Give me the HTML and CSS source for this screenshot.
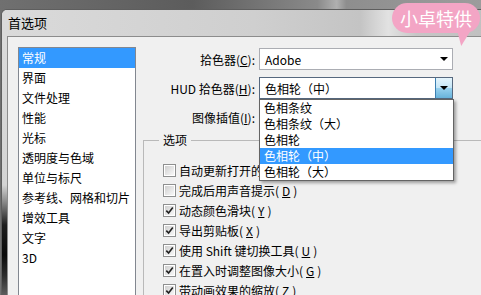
FILE: index.html
```html
<!DOCTYPE html>
<html lang="zh-CN">
<head>
    <meta charset="UTF-8">
    <title>首选项</title>
    <link rel="stylesheet" href="styles.css">
</head>
<body>

    <div class="window">
        <div class="title-bar">首选项</div>

        <div class="client">
            <ul class="nav-list">
                <li class="active">常规</li>
                <li>界面</li>
                <li>文件处理</li>
                <li>性能</li>
                <li>光标</li>
                <li>透明度与色域</li>
                <li>单位与标尺</li>
                <li>参考线、网格和切片</li>
                <li>增效工具</li>
                <li>文字</li>
                <li>3D</li>
            </ul>

            <div class="main-pane">
                <div class="form-grid">
                    <label class="form-label">拾色器(<u>C</u>):</label>
                    <div class="select">
                        <span>Adobe</span>
                        <span class="arrow"></span>
                    </div>

                    <label class="form-label">HUD 拾色器(<u>H</u>):</label>
                    <div class="select select-open">
                        <span>色相轮（中）</span>
                        <span class="arrow-btn"><span class="arrow"></span></span>
                        <ul class="dropdown">
                            <li>色相条纹</li>
                            <li>色相条纹（大）</li>
                            <li>色相轮</li>
                            <li class="active">色相轮（中）</li>
                            <li>色相轮（大）</li>
                        </ul>
                    </div>

                    <label class="form-label">图像插值(<u>I</u>):</label>
                    <div class="select">
                        <span>两次立方（自动）</span>
                        <span class="arrow"></span>
                    </div>
                </div>

                <fieldset class="options">
                    <legend>选项</legend>
                    <div class="check-row"><span class="box"></span>自动更新打开的文档</div>
                    <div class="check-row"><span class="box"></span>完成后用声音提示(<u>D</u>)</div>
                    <div class="check-row"><span class="box checked"><svg viewBox="0 0 9 9"><path d="M1.3 4.6 L3.6 7 L7.8 1.6"/></svg></span>动态颜色滑块(<u>Y</u>)</div>
                    <div class="check-row"><span class="box checked"><svg viewBox="0 0 9 9"><path d="M1.3 4.6 L3.6 7 L7.8 1.6"/></svg></span>导出剪贴板(<u>X</u>)</div>
                    <div class="check-row"><span class="box checked"><svg viewBox="0 0 9 9"><path d="M1.3 4.6 L3.6 7 L7.8 1.6"/></svg></span>使用 Shift 键切换工具(<u>U</u>)</div>
                    <div class="check-row"><span class="box checked"><svg viewBox="0 0 9 9"><path d="M1.3 4.6 L3.6 7 L7.8 1.6"/></svg></span>在置入时调整图像大小(<u>G</u>)</div>
                    <div class="check-row"><span class="box checked"><svg viewBox="0 0 9 9"><path d="M1.3 4.6 L3.6 7 L7.8 1.6"/></svg></span>带动画效果的缩放(<u>Z</u>)</div>
                </fieldset>
            </div>
        </div>
    </div>

    <div class="bubble">小卓特供</div>

</body>
</html>
```

FILE: styles.css
```css
html, body {
    margin: 0;
    height: 295px;
    overflow: hidden;
}

body {
    padding-top: 9px;
    box-sizing: border-box;
    font-family: "Noto Sans CJK SC", sans-serif;
    font-size: 12px;
    color: #000;
    background: linear-gradient(90deg, #707070 0, #5c5c5c 40%, #8a8a8a 66%, #b0b0b0 70%, #8e8e8e 72%, #9c9c9c 100%);
}

.window {
    margin-left: 1px;
    width: 560px;
    border: 1px solid #5e5e5e;
    border-right: none;
    border-bottom: none;
    border-top-left-radius: 6px;
    background: linear-gradient(to bottom, #dcdcdc 0, #d4d4d4 175px, #8a8a8a 192px, #1e1e1e 215px, #0a0a0a 245px, #2a2a2a 265px, #6a6a6a 290px);
}

.title-bar {
    height: 26px;
    line-height: 26px;
    padding-left: 6px;
    font-size: 13px;
    border-top-left-radius: 5px;
    background: linear-gradient(90deg, #dadada 0, #cfcfcf 45%, #c4c4c4 64%, #e2e2e2 69%, #c6c6c6 74%, #bababa 100%);
}

.client {
    margin-left: 5px;
    height: 300px;
    display: flex;
    padding: 10px 0 0 10px;
    border-top: 1px solid #8c8c8c;
    border-left: 1px solid #8c8c8c;
    background: #f0f0f0;
}

.nav-list {
    list-style: none;
    margin: 0;
    padding: 0;
    width: 116px;
    flex: none;
    border: 1px solid #828790;
    background: #fff;
}

.nav-list li {
    height: 20px;
    line-height: 20px;
    padding-left: 3px;
    white-space: nowrap;
}

.nav-list li.active {
    background: #3399ff;
    color: #fff;
}

.main-pane {
    margin-left: 7px;
    flex: 1;
}

.form-grid {
    display: grid;
    grid-template-columns: 112px 194px;
    column-gap: 4px;
    row-gap: 7px;
    align-items: center;
    padding-top: 1px;
}

.form-label {
    text-align: right;
    white-space: nowrap;
}

.select {
    position: relative;
    height: 22px;
    box-sizing: border-box;
    display: flex;
    align-items: center;
    padding-left: 5px;
    border: 1px solid #abadb3;
    background: #fff;
}

.arrow {
    margin-left: auto;
    margin-right: 4px;
    width: 0;
    height: 0;
    border-left: 4px solid transparent;
    border-right: 4px solid transparent;
    border-top: 4px solid #000;
}

.select-open {
    border-color: #56687e;
}

.arrow-btn {
    margin-left: auto;
    width: 16px;
    align-self: stretch;
    display: flex;
    align-items: center;
    justify-content: center;
    border-left: 1px solid #3c7fb1;
    background: linear-gradient(#e5f4fc 0, #c4e5f6 50%, #98d1ef 51%, #68b3db 100%);
}

.arrow-btn .arrow {
    margin: 0;
}

.dropdown {
    position: absolute;
    left: -1px;
    top: calc(100% + 1px);
    width: 195px;
    box-sizing: border-box;
    list-style: none;
    margin: 0;
    padding: 0;
    border: 1px solid #646464;
    background: #fff;
    box-shadow: 2px 2px 3px rgba(0,0,0,0.35);
    z-index: 10;
}

.dropdown li {
    height: 16px;
    line-height: 16px;
    padding-left: 4px;
}

.dropdown li.active {
    background: #3399ff;
    color: #fff;
}

.options {
    margin: 4px 0 0;
    padding: 12px 0 0 19px;
    height: 200px;
    border: 1px solid #b9b9b9;
    border-right: none;
    border-bottom: none;
    min-width: 0;
}

.options legend {
    margin-left: -4px;
    padding: 0 4px;
    line-height: 16px;
}

.check-row {
    height: 20px;
    display: flex;
    align-items: center;
    gap: 3px;
    white-space: nowrap;
}

.box {
    width: 13px;
    height: 13px;
    flex: none;
    box-sizing: border-box;
    padding: 1px;
    border: 1px solid #8e8f8f;
    background: linear-gradient(135deg, #cfcfcf, #f8f8f8) content-box, #fff;
}

.box svg {
    display: block;
    width: 9px;
    height: 9px;
    fill: none;
    stroke: #222;
    stroke-width: 1.6;
}

.bubble {
    position: absolute;
    left: 392px;
    top: 3px;
    width: 88px;
    height: 30px;
    border-radius: 15px;
    background: #f3a5c5;
    color: #fff;
    font-size: 18px;
    line-height: 30px;
    text-align: center;
}

.bubble::after {
    content: "";
    position: absolute;
    left: 65px;
    top: 27px;
    width: 14px;
    height: 16px;
    background: #f3a5c5;
    clip-path: polygon(0 0, 100% 0, 30% 100%);
}
```
